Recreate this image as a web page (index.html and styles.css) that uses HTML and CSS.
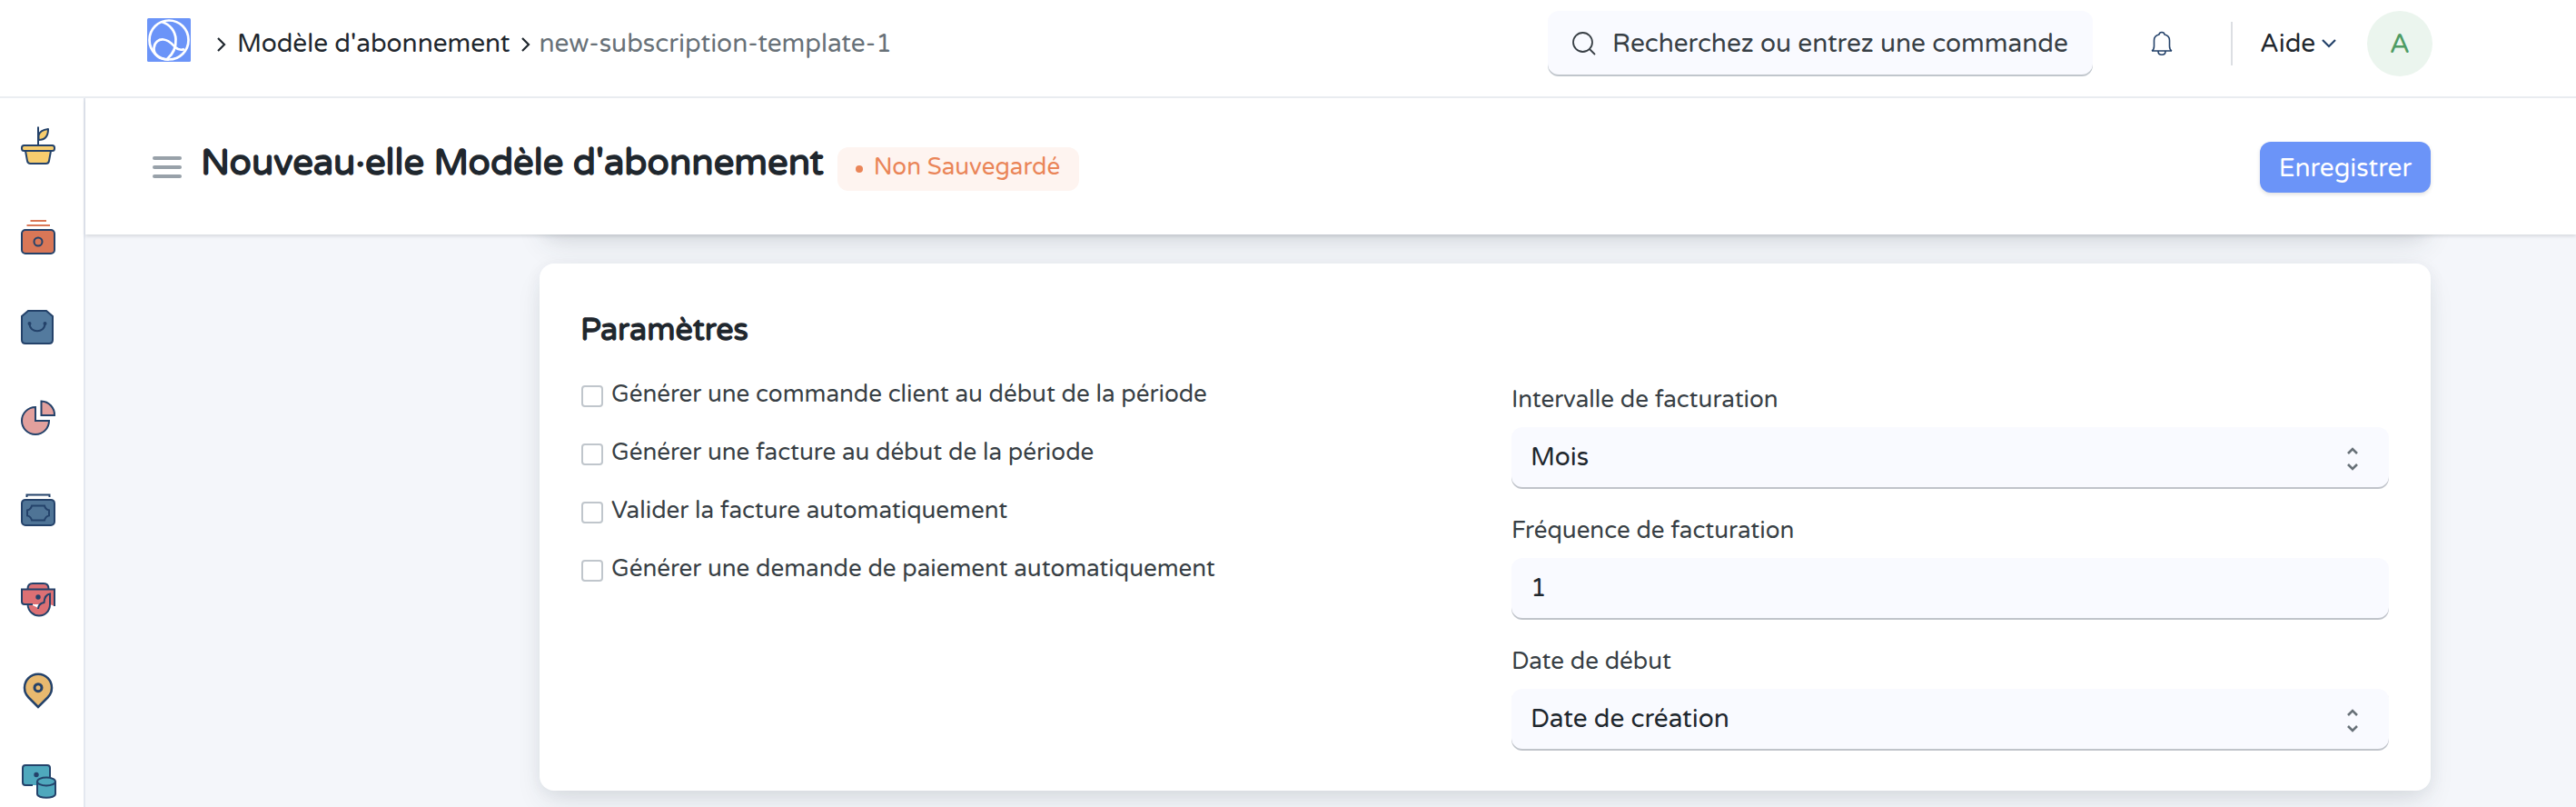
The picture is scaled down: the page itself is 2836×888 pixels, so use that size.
FILE: index.html
```html
<!DOCTYPE html>
<html lang="fr">
<head>
<meta charset="utf-8">
<title>Modèle d'abonnement</title>
<link rel="stylesheet" href="styles.css">
</head>
<body>
<header class="navbar">
  <svg class="logo" width="48" height="48" viewBox="0 0 48 48" fill="none" stroke="#fff" stroke-width="2.7"><rect width="48" height="48" rx="1.5" fill="#6b94f8" stroke="none"/><circle cx="24" cy="24" r="21.5"/><path d="M16 4C26 7 31 15 31.500 23C32 31 29 39 22 45"/><path d="M24 45.500C13 46 7 40 7.500 33C8 26 13 23 18 23.500C24 24 27 28 31 32C34 35 37 35.500 41 34"/></svg>
  <nav class="crumbs">
    <svg class="chev" width="12" height="18" viewBox="0 0 12 18"><path d="M2 2l7 7-7 7"/></svg>
    <a class="t crumb-link">Modèle d'abonnement</a>
    <svg class="chev" width="12" height="18" viewBox="0 0 12 18"><path d="M2 2l7 7-7 7"/></svg>
    <a class="t crumb-current">new-subscription-template-1</a>
  </nav>
  <div class="search">
    <svg width="28" height="28" viewBox="0 0 28 28" fill="none" stroke="#383f45" stroke-width="1.8" stroke-linecap="round"><circle cx="12.500" cy="12.500" r="10.500"/><path d="M20 20l5.500 5.500"/></svg>
    <span class="t search-text">Recherchez ou entrez une commande</span>
  </div>
  <svg class="bell" width="24" height="28" viewBox="0 0 24 28" fill="none" stroke="#24426a" stroke-width="1.600" stroke-linejoin="round"><path d="M1 22H23M1 22Q3.500 20.500 3.500 17V10.500C3.500 6.500 6.500 4.500 9 4C9.500 .6 14.500 .6 15 4C17.500 4.500 20.500 6.500 20.500 10.500V17Q20.500 20.500 23 22M8 22.500C8 27.500 16 27.500 16 22.500"/></svg>
  <span class="divider"></span>
  <span class="t help">Aide</span>
  <svg class="caret" width="18" height="12" viewBox="0 0 18 12"><path d="M2 2l7 7 7-7"/></svg>
  <span class="avatar">A</span>
</header>
<div class="body">
  <aside class="sidebar">
    <svg viewBox="0 0 40 44" stroke="#24426a" stroke-width="2" stroke-linejoin="round"><path d="M6 28l2 11q.6 3 3.500 3h17q3 0 3.500-3l2-11z" fill="#f7cd6e"/><rect x="2" y="22" width="36" height="6" rx="2.500" fill="#f7cd6e"/><path d="M20 1.500V22" fill="none"/><path d="M20.500 16V11Q22 5 31 4Q31 16 20.500 16z" fill="#f7cd6e"/></svg>
    <svg viewBox="0 0 40 44" stroke="#24426a" stroke-width="2"><path d="M11.500 5H29M7.500 10H33" stroke="#d97757"/><rect x="2" y="15" width="36" height="26" rx="4" fill="#d97757"/><circle cx="20" cy="28" r="4.500" fill="none"/></svg>
    <svg viewBox="0 0 40 44" stroke="#24426a" stroke-width="2"><path d="M9 4H29L36 10V36q0 4-4 4H6q-4 0-4-4V10z" fill="#537a9e"/><path d="M10.500 18C10.500 29 27.500 29 27.500 18" fill="none"/><circle cx="10.500" cy="18" r="1"/><circle cx="27.500" cy="18" r="1"/></svg>
    <svg viewBox="0 0 40 44" stroke="#24426a" stroke-width="2" fill="#e2a09d"><path d="M17 10A15 15 0 1 0 32 25H17z"/><path d="M23.500 3.500V19H38A15 15 0 0 0 23.500 3.500z"/></svg>
    <svg viewBox="0 -2.4 40 44" stroke="#24426a" stroke-width="2"><path d="M7.500 6.500V4H32.500V6.500" fill="none"/><rect x="2" y="9.500" width="36" height="28" rx="4" fill="#4f7496"/><path d="M13 16H27Q28 20 32 21V27Q28 28 27 32H13Q12 28 8 27V21Q12 20 13 16z" fill="none"/></svg>
    <svg viewBox="0 -1 40 44" stroke="#24426a" stroke-width="2"><path d="M8.500 9Q8.500 3 14 3H26Q31.500 3 31.500 9" fill="#dc7074"/><path d="M2 9.500H38V28L33 26V26C32 34 27 38.500 21 38.500C15 38.500 10 34 9 26H5Q2 26 2 23z" fill="#dc7074" stroke="none"/><path d="M12 26h9l-1 4z" fill="#fff" stroke="none"/><path d="M14 26H5Q2 26 2 23V9.500H38V28M8.500 26C9 34 15 38.500 21 38.500C28 38.500 33 33 33 26V14.500C29 15 27 18 26.500 24C22 25 20 27 20 31" fill="none"/><circle cx="20" cy="18" r="1.700" fill="#24426a"/></svg>
    <svg viewBox="0 0 40 44" stroke="#24426a" stroke-width="2.500"><path d="M20 40L9.500 29.500A15 15 0 1 1 30.500 29.500z" fill="#e8b96f"/><circle cx="20" cy="18.700" r="4" fill="#e8b96f" stroke-width="3"/></svg>
    <svg viewBox="0 1 40 44" stroke="#24426a" stroke-width="2"><path d="M14 27H6q-3 0-3-3V8q0-3 3-3H30q3 0 3 3V19l-8 8z" fill="#4fa8bd" stroke="none"/><path d="M14 27H6q-3 0-3-3V8q0-3 3-3H30q3 0 3 3V18" fill="none"/><circle cx="18" cy="15.500" r="1.700" fill="#24426a"/><path d="M19 23V36.500C19 42.200 39 42.200 39 36.500V23" fill="#4fa8bd"/><ellipse cx="29" cy="23" rx="10" ry="4.500" fill="#4fa8bd"/></svg>
  </aside>
  <main class="main">
    <div class="page-head">
      <span class="burger"><i></i><i></i><i></i></span>
      <h1 class="t title">Nouveau·elle Modèle d'abonnement</h1>
      <span class="badge"><i class="dot"></i><span class="t badge-text">Non Sauvegardé</span></span>
      <button class="save"><span class="t save-text">Enregistrer</span></button>
    </div>
    <div class="canvas">
      <section class="card prev"></section>
      <section class="card">
        <h2 class="t section-title">Paramètres</h2>
        <div class="cols">
          <div class="checks">
            <label class="check"><i></i><span class="t">Générer une commande client au début de la période</span></label>
            <label class="check"><i></i><span class="t">Générer une facture au début de la période</span></label>
            <label class="check"><i></i><span class="t">Valider la facture automatiquement</span></label>
            <label class="check"><i></i><span class="t">Générer une demande de paiement automatiquement</span></label>
          </div>
          <div class="fields">
            <div class="field"><span class="t label">Intervalle de facturation</span><div class="control"><span class="t">Mois</span><svg class="updown" width="14" height="26" viewBox="0 0 14 26"><path d="M2 7l5-5 5 5M2 19l5 5 5-5"/></svg></div></div>
            <div class="field"><span class="t label">Fréquence de facturation</span><div class="control"><span class="t">1</span></div></div>
            <div class="field"><span class="t label">Date de début</span><div class="control"><span class="t">Date de création</span><svg class="updown" width="14" height="26" viewBox="0 0 14 26"><path d="M2 7l5-5 5 5M2 19l5 5 5-5"/></svg></div></div>
          </div>
        </div>
      </section>
    </div>
  </main>
</div>
</body>
</html>
```
FILE: styles.css
```css
* { box-sizing: border-box; }
body { margin: 0; height: 888px; overflow: hidden; background: #fff; color: #1f272e; font-family: "Varela Round", "Noto Sans", sans-serif; font-size: 28px; display: flex; flex-direction: column; }
.t { white-space: nowrap; }
h1, h2 { margin: 0; }
.navbar { height: 108px; flex: none; border-bottom: 2px solid #ebeef2; display: flex; align-items: center; padding: 0 158px 10px 162px; }
.logo { margin-top: -8px; }
.crumbs { display: flex; align-items: center; margin-left: 28px; margin-top: -1px; }
.chev { fill: none; stroke: #1f272e; stroke-width: 2.2; margin-top: 2px; }
.crumb-link { margin: 0 11px; }
.crumb-current { margin-left: 9px; color: #687178; }
.search { width: 600px; height: 72px; margin-left: auto; background: #f9faff; border-radius: 12px; box-shadow: inset 0 -2px #c0c6cc; display: flex; align-items: center; padding-left: 26px; color: #383f45; }
.search-text { margin: -1px 0 0 17px; }
.bell { margin-left: 64px; }
.divider { width: 2px; height: 48px; margin-left: 64px; background: #dcdfe3; }
.help { width: 56px; margin: -1px 0 0 30px; }
.caret { margin-left: 11px; fill: none; stroke: #24426a; stroke-width: 2.2; }
.avatar { width: 72px; height: 72px; margin-left: 33px; border-radius: 50%; background: #ebf5ee; color: #4f9c64; font-size: 30px; display: flex; align-items: center; justify-content: center; }
.body { flex: 1; min-height: 0; display: flex; }
.sidebar { width: 94px; flex: none; border-right: 2px solid #e4e8f0; padding: 30px 0 0 22px; display: flex; flex-direction: column; gap: 56px; }
.sidebar svg { width: 40px; height: 44px; flex: none; }
.main { flex: 1; display: flex; flex-direction: column; min-width: 0; }
.page-head { height: 150px; flex: none; padding: 0 160px 0 74px; background: #fff; box-shadow: 0 2px 4px rgba(60,70,80,.16); display: flex; align-items: center; position: relative; z-index: 1; }
.burger { width: 32px; display: flex; flex-direction: column; gap: 6px; margin-top: 2px; }
.burger i { height: 4px; border-radius: 2px; background: #98a1a9; }
.title { margin: -9px 0 0 21px; font-size: 40px; font-weight: 400; -webkit-text-stroke: 1.5px #1f272e; }
.badge { width: 266px; height: 48px; margin-left: 15px; margin-top: 6px; border-radius: 12px; background: #fef4f0; color: #ea8558; font-size: 26px; display: flex; align-items: center; padding-left: 20px; }
.badge-text { margin-top: -5px; }
.dot { width: 8px; height: 8px; border-radius: 50%; background: #ea8558; margin-right: 12px; }
.save { width: 188px; height: 56px; margin-left: auto; margin-top: 2px; padding: 1px 0 0; border: 0; border-radius: 12px; background: #6b94f8; color: #fff; font: inherit; box-shadow: 0 2px 4px rgba(0,0,0,.12); }
.canvas { flex: 1; min-height: 0; background: #f4f6fa; padding: 0 160px 0 500px; overflow: hidden; }
.card { height: 580px; background: #fff; border-radius: 16px; padding: 52px 46px 0; box-shadow: 0 16px 32px -6px rgba(40,55,65,.12), 0 2px 18px rgba(40,55,65,.06); }
.card.prev { height: 200px; margin: -200px 0 32px; }
.section-title { margin-left: -1px; font-size: 34px; line-height: 44px; font-weight: 400; -webkit-text-stroke: 1.3px #1f272e; }
.cols { display: grid; grid-template-columns: 1fr 966px; }
.checks { padding-top: 30px; display: flex; flex-direction: column; gap: 28px; font-size: 26px; color: #383f45; }
.check { height: 36px; display: flex; align-items: center; }
.check i { width: 24px; height: 24px; border: 2px solid #c0c6cc; border-radius: 4px; margin: 4px 9px 0 0; }
.check .t { margin-top: -1px; }
.fields { padding-top: 36px; display: flex; flex-direction: column; gap: 28px; }
.field { height: 116px; }
.label { display: block; height: 48px; line-height: 36px; font-size: 26px; color: #383f45; }
.control { height: 68px; background: #f9faff; border-radius: 12px; box-shadow: inset 0 -2px #c0c4ca; padding: 0 33px 2px 21px; display: flex; align-items: center; justify-content: space-between; }
.updown { fill: none; stroke: #687178; stroke-width: 2.6; margin-top: 3px; }
```
